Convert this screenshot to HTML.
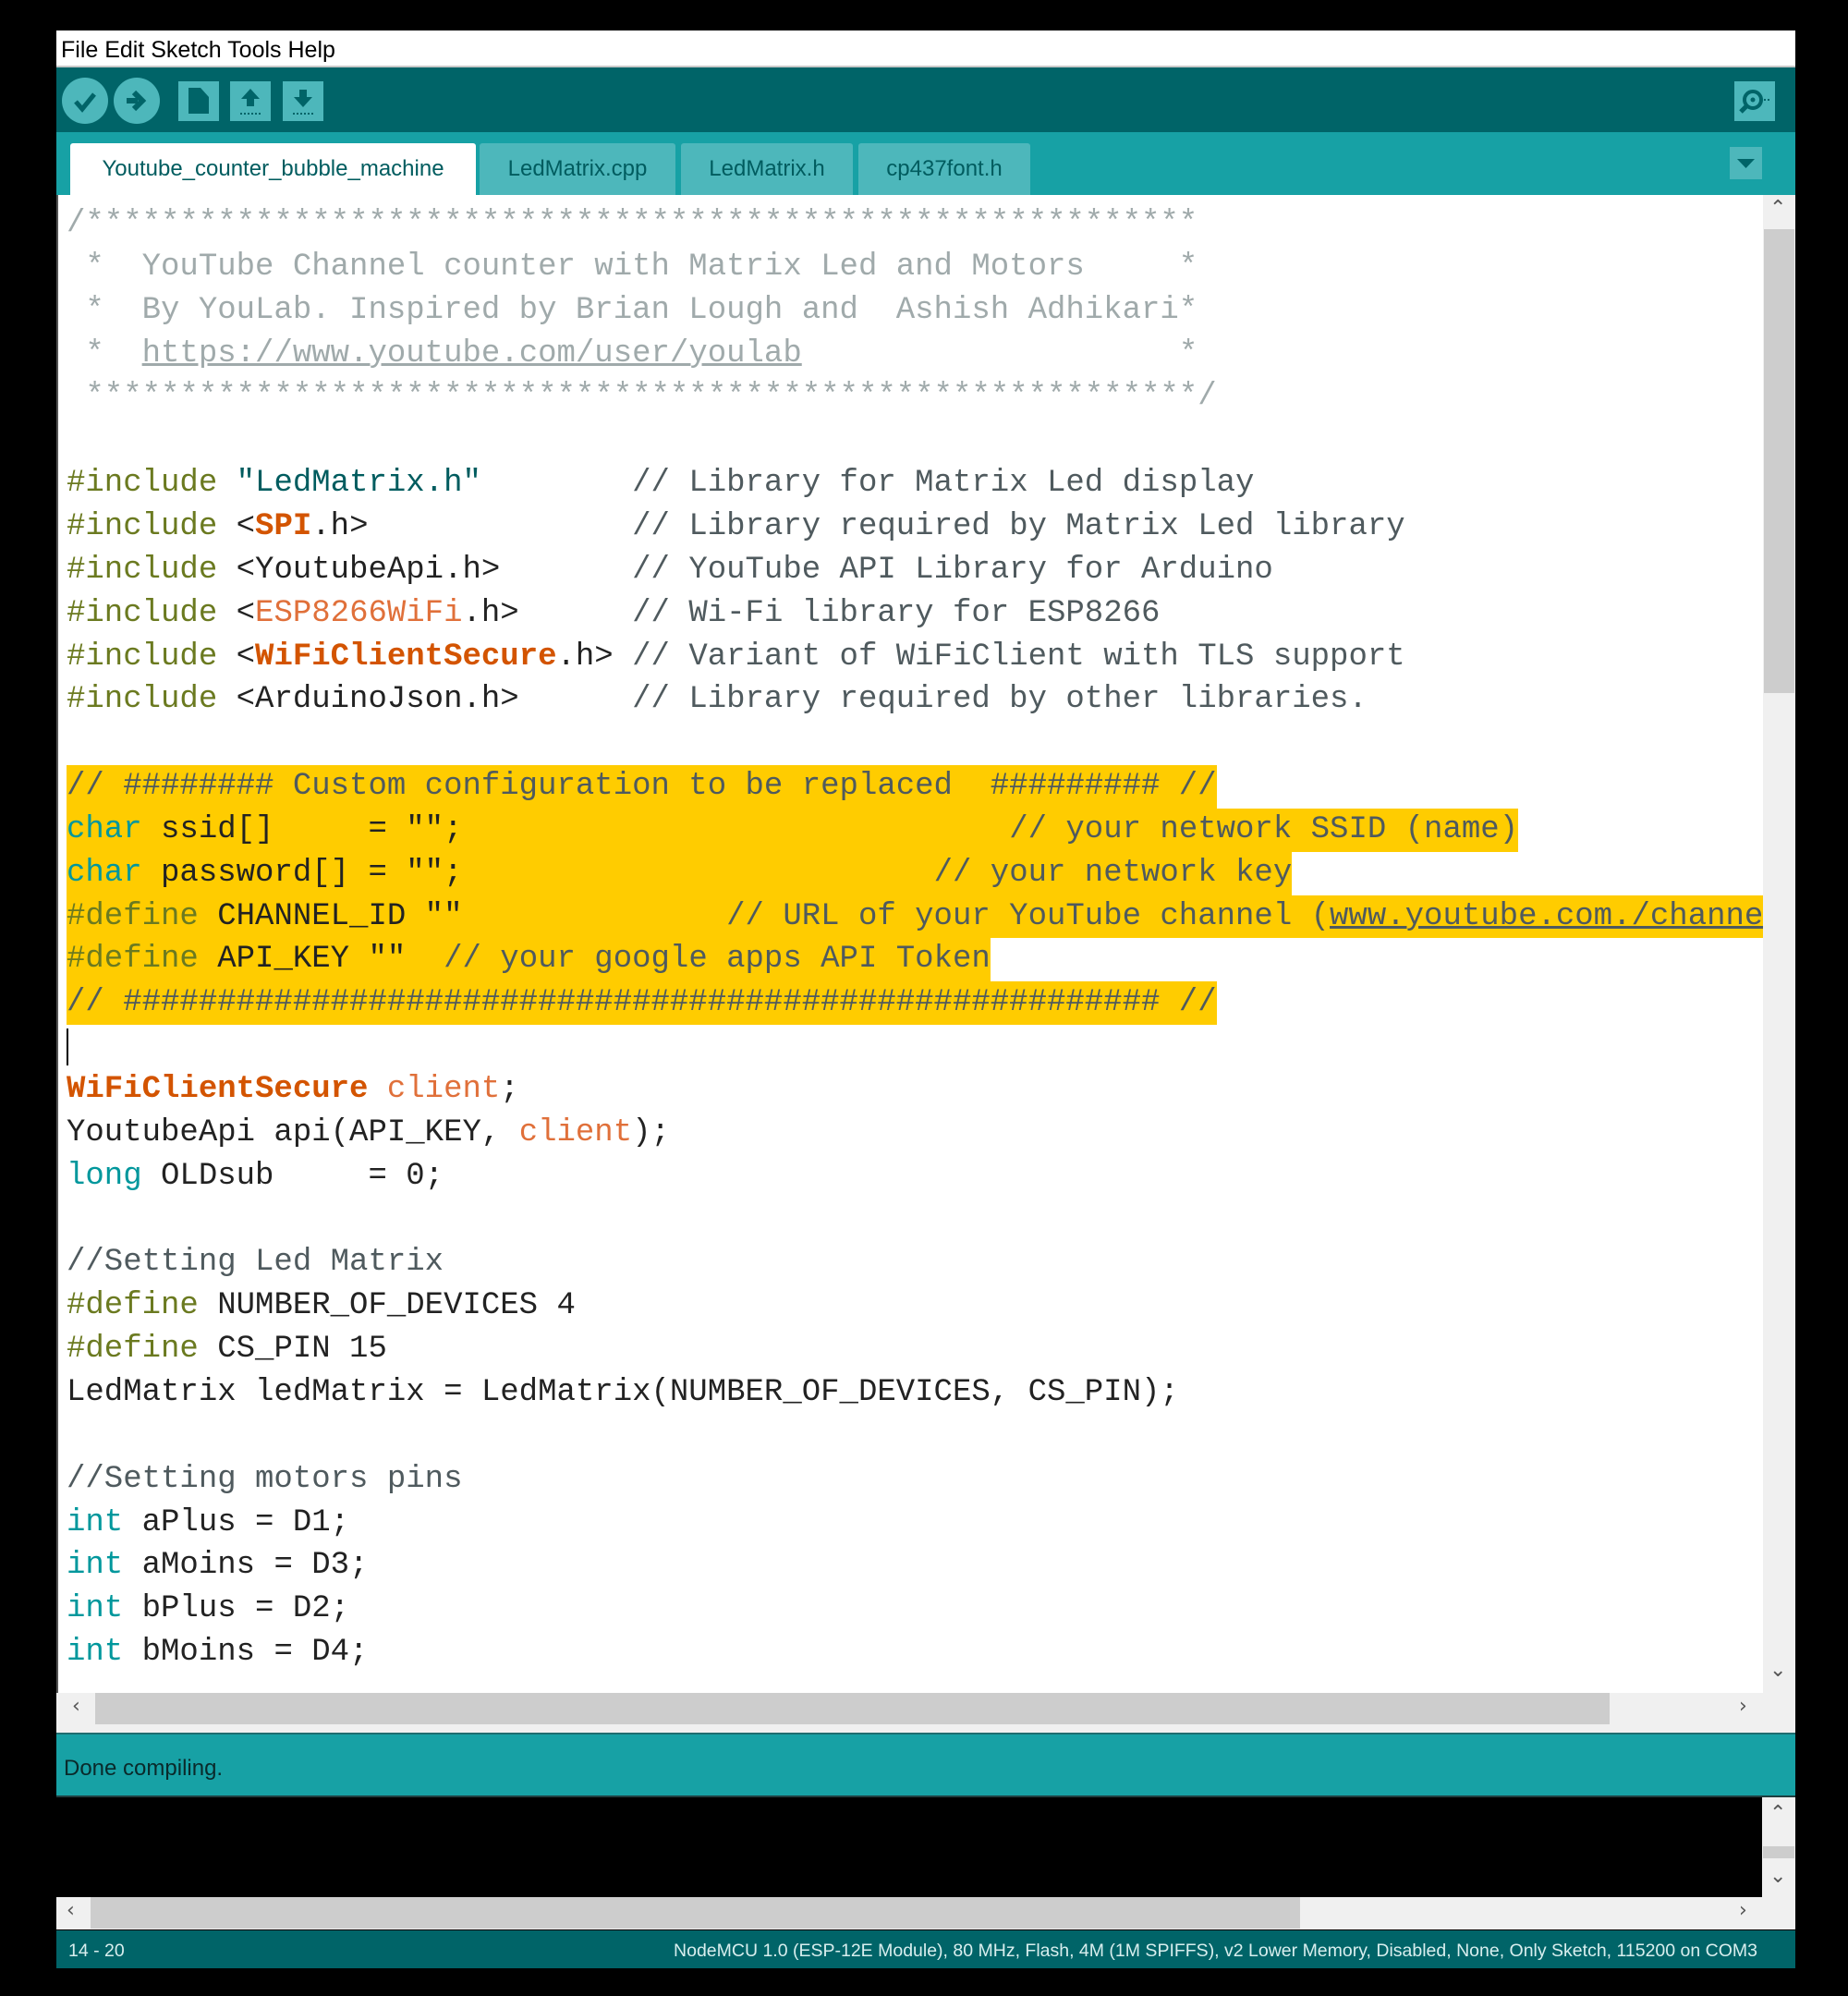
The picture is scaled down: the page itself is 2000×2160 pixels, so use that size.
<!DOCTYPE html>
<html><head><meta charset="utf-8"><style>
*{margin:0;padding:0;box-sizing:border-box}
body{width:2000px;height:2160px;background:#000;position:relative;overflow:hidden;font-family:"Liberation Sans",sans-serif}
.a{position:absolute}
#menu{left:61px;top:33px;width:1882px;height:40px;background:#fff;border-bottom:2px solid #c8c8c8;font-size:25px;line-height:42px;padding-left:5px;color:#000}
#tb{left:61px;top:73px;width:1882px;height:70px;background:#006468}
#tabs{left:61px;top:143px;width:1882px;height:68px;background:#17a1a5}
.tab{position:absolute;top:12px;height:56px;background:#4db7bb;color:#005c5f;font-size:24px;line-height:56px;text-align:center;border-radius:3px 3px 0 0}
#ed{left:61px;top:211px;width:1847px;height:1621px;background:#fff;overflow:hidden;border-left:2px solid #555}
.l{position:absolute;left:9px;height:46.85px;line-height:46.85px;font-family:"Liberation Mono",monospace;font-size:34px;white-space:pre;color:#222}
.h{background:#ffcc00;display:inline-block;height:46.85px}
.c{color:#a0aaab}.k{color:#6b7a20}.s{color:#005c5f}.t{color:#00979c}.o{color:#d35400}.ob{color:#d35400;font-weight:bold}.lc{color:#e0703a}.g{color:#4f5a5e}
u{text-decoration:underline}
.sb{background:#f0f0f0}
.th{background:#cdcdcd}
.ar{color:#555;font-size:22px;position:absolute;font-family:"DejaVu Sans",sans-serif}
</style></head><body>
<div class="a" id="menu">File Edit Sketch Tools Help</div>
<div class="a" id="tb">
<svg width="1882" height="70" style="position:absolute;left:0;top:0">
<circle cx="31" cy="36" r="25" fill="#4db7bb"/>
<path d="M21 37 l7 8 l13 -16" stroke="#006468" stroke-width="5" fill="none"/>
<circle cx="87" cy="36" r="25" fill="#4db7bb"/>
<path d="M76 36 h12 M84 27 l9 9 l-9 9" stroke="#006468" stroke-width="6" fill="none"/>
<rect x="132" y="15" width="44" height="43" fill="#4db7bb"/>
<path d="M143 22 h13 l9 10 v18 h-22z" fill="#006468"/>
<rect x="188" y="15" width="44" height="43" fill="#4db7bb"/>
<path d="M210 23 l-10 11 h6 v8 h8 v-8 h6z" fill="#006468"/>
<path d="M199 50 h22" stroke="#006468" stroke-width="2" stroke-dasharray="2 2"/>
<rect x="245" y="15" width="44" height="43" fill="#4db7bb"/>
<path d="M267 43 l-10 -11 h6 v-8 h8 v8 h6z" fill="#006468"/>
<path d="M256 50 h22" stroke="#006468" stroke-width="2" stroke-dasharray="2 2"/>
<rect x="1816" y="15" width="44" height="43" fill="#4db7bb"/>
<circle cx="1836" cy="35" r="9" stroke="#006468" stroke-width="4" fill="none"/>
<circle cx="1836" cy="35" r="2.5" fill="#006468"/>
<path d="M1830 41 l-7 7" stroke="#006468" stroke-width="5"/>
<path d="M1848 35 h8" stroke="#006468" stroke-width="2" stroke-dasharray="2 2"/>
</svg></div>
<div class="a" id="tabs">
<div class="tab" style="left:15px;width:439px;background:#fff;color:#005c5f">Youtube_counter_bubble_machine</div>
<div class="tab" style="left:458px;width:212px">LedMatrix.cpp</div>
<div class="tab" style="left:676px;width:186px">LedMatrix.h</div>
<div class="tab" style="left:868px;width:186px">cp437font.h</div>
<svg width="40" height="40" style="position:absolute;left:1811px;top:16px"><rect width="35" height="35" fill="#4db7bb"/><path d="M8 13 h19 l-9.5 10z" fill="#006468"/></svg>
</div>
<div class="a" id="ed">
<div class="l c" style="top:8px">/***********************************************************</div>
<div class="l c" style="top:54.85px"> *  YouTube Channel counter with Matrix Led and Motors     *</div>
<div class="l c" style="top:101.7px"> *  By YouLab. Inspired by Brian Lough and  Ashish Adhikari*</div>
<div class="l c" style="top:148.55px"> *  <u>https://www.youtube.com/user/youlab</u>                    *</div>
<div class="l c" style="top:195.4px"> ***********************************************************/</div>
<div class="l" style="top:289.1px"><span class="k">#include</span> <span class="s">"LedMatrix.h"</span>        <span class="g">// Library for Matrix Led display</span></div>
<div class="l" style="top:335.95px"><span class="k">#include</span> &lt;<span class="ob">SPI</span>.h&gt;              <span class="g">// Library required by Matrix Led library</span></div>
<div class="l" style="top:382.8px"><span class="k">#include</span> &lt;YoutubeApi.h&gt;       <span class="g">// YouTube API Library for Arduino</span></div>
<div class="l" style="top:429.65px"><span class="k">#include</span> &lt;<span class="lc">ESP8266WiFi</span>.h&gt;      <span class="g">// Wi-Fi library for ESP8266</span></div>
<div class="l" style="top:476.5px"><span class="k">#include</span> &lt;<span class="ob">WiFiClientSecure</span>.h&gt; <span class="g">// Variant of WiFiClient with TLS support</span></div>
<div class="l" style="top:523.35px"><span class="k">#include</span> &lt;ArduinoJson.h&gt;      <span class="g">// Library required by other libraries.</span></div>
<div class="l" style="top:617.05px"><span class="h"><span class="g">// ######## Custom configuration to be replaced  ######### //</span></span></div>
<div class="l" style="top:663.9px"><span class="h"><span class="t">char</span> ssid[]     = "";                             <span class="g">// your network SSID (name)</span></span></div>
<div class="l" style="top:710.75px"><span class="h"><span class="t">char</span> password[] = "";                         <span class="g">// your network key</span></span></div>
<div class="l" style="top:757.6px"><span class="h"><span class="k">#define</span> CHANNEL_ID ""              <span class="g">// URL of your YouTube channel (<u>www.youtube.com./channel/</u>)</span></span></div>
<div class="l" style="top:804.45px"><span class="h"><span class="k">#define</span> API_KEY ""  <span class="g">// your google apps API Token</span></span></div>
<div class="l" style="top:851.3px"><span class="h"><span class="g">// ####################################################### //</span></span></div>
<div class="a" style="left:9px;top:902px;width:2px;height:40px;background:#000"></div>
<div class="l" style="top:945px"><span class="ob">WiFiClientSecure</span> <span class="lc">client</span>;</div>
<div class="l" style="top:991.85px">YoutubeApi api(API_KEY, <span class="lc">client</span>);</div>
<div class="l" style="top:1038.7px"><span class="t">long</span> OLDsub     = 0;</div>
<div class="l g" style="top:1132.4px">//Setting Led Matrix</div>
<div class="l" style="top:1179.25px"><span class="k">#define</span> NUMBER_OF_DEVICES 4</div>
<div class="l" style="top:1226.1px"><span class="k">#define</span> CS_PIN 15</div>
<div class="l" style="top:1272.95px">LedMatrix ledMatrix = LedMatrix(NUMBER_OF_DEVICES, CS_PIN);</div>
<div class="l g" style="top:1366.65px">//Setting motors pins</div>
<div class="l" style="top:1413.5px"><span class="t">int</span> aPlus = D1;</div>
<div class="l" style="top:1460.35px"><span class="t">int</span> aMoins = D3;</div>
<div class="l" style="top:1507.2px"><span class="t">int</span> bPlus = D2;</div>
<div class="l" style="top:1554.05px"><span class="t">int</span> bMoins = D4;</div>
</div>
<div class="a sb" style="left:1908px;top:211px;width:35px;height:1621px"></div>
<div class="a th" style="left:1909px;top:248px;width:33px;height:502px"></div>
<div class="ar" style="left:1915px;top:213px">⌃</div>
<div class="ar" style="left:1915px;top:1795px">⌄</div>
<div class="a sb" style="left:61px;top:1832px;width:1882px;height:44px"></div>
<div class="a th" style="left:103px;top:1832px;width:1639px;height:34px"></div>
<div class="ar" style="left:78px;top:1834px">‹</div>
<div class="ar" style="left:1882px;top:1834px">›</div>
<div class="a" style="left:61px;top:1875px;width:1882px;height:70px;background:#17a1a5;border-top:2px solid #1f6d70;border-bottom:2px solid #1f3f40;font-size:24px;line-height:74px;padding-left:8px;color:#0a2a2b">Done compiling.</div>
<div class="a sb" style="left:1907px;top:1945px;width:36px;height:108px"></div>
<div class="a th" style="left:1908px;top:1998px;width:34px;height:13px"></div>
<div class="ar" style="left:1915px;top:1950px">⌃</div>
<div class="ar" style="left:1915px;top:2018px">⌄</div>
<div class="a sb" style="left:61px;top:2053px;width:1882px;height:35px"></div>
<div class="a th" style="left:98px;top:2053px;width:1309px;height:34px"></div>
<div class="ar" style="left:72px;top:2055px">‹</div>
<div class="ar" style="left:1882px;top:2055px">›</div>
<div class="a" style="left:61px;top:2089px;width:1882px;height:41px;background:#006468;color:#d8eeee;font-size:19.5px;line-height:45px">
<span style="position:absolute;left:13px">14 - 20</span>
<span style="position:absolute;right:41px">NodeMCU 1.0 (ESP-12E Module), 80 MHz, Flash, 4M (1M SPIFFS), v2 Lower Memory, Disabled, None, Only Sketch, 115200 on COM3</span></div>
</body></html>
